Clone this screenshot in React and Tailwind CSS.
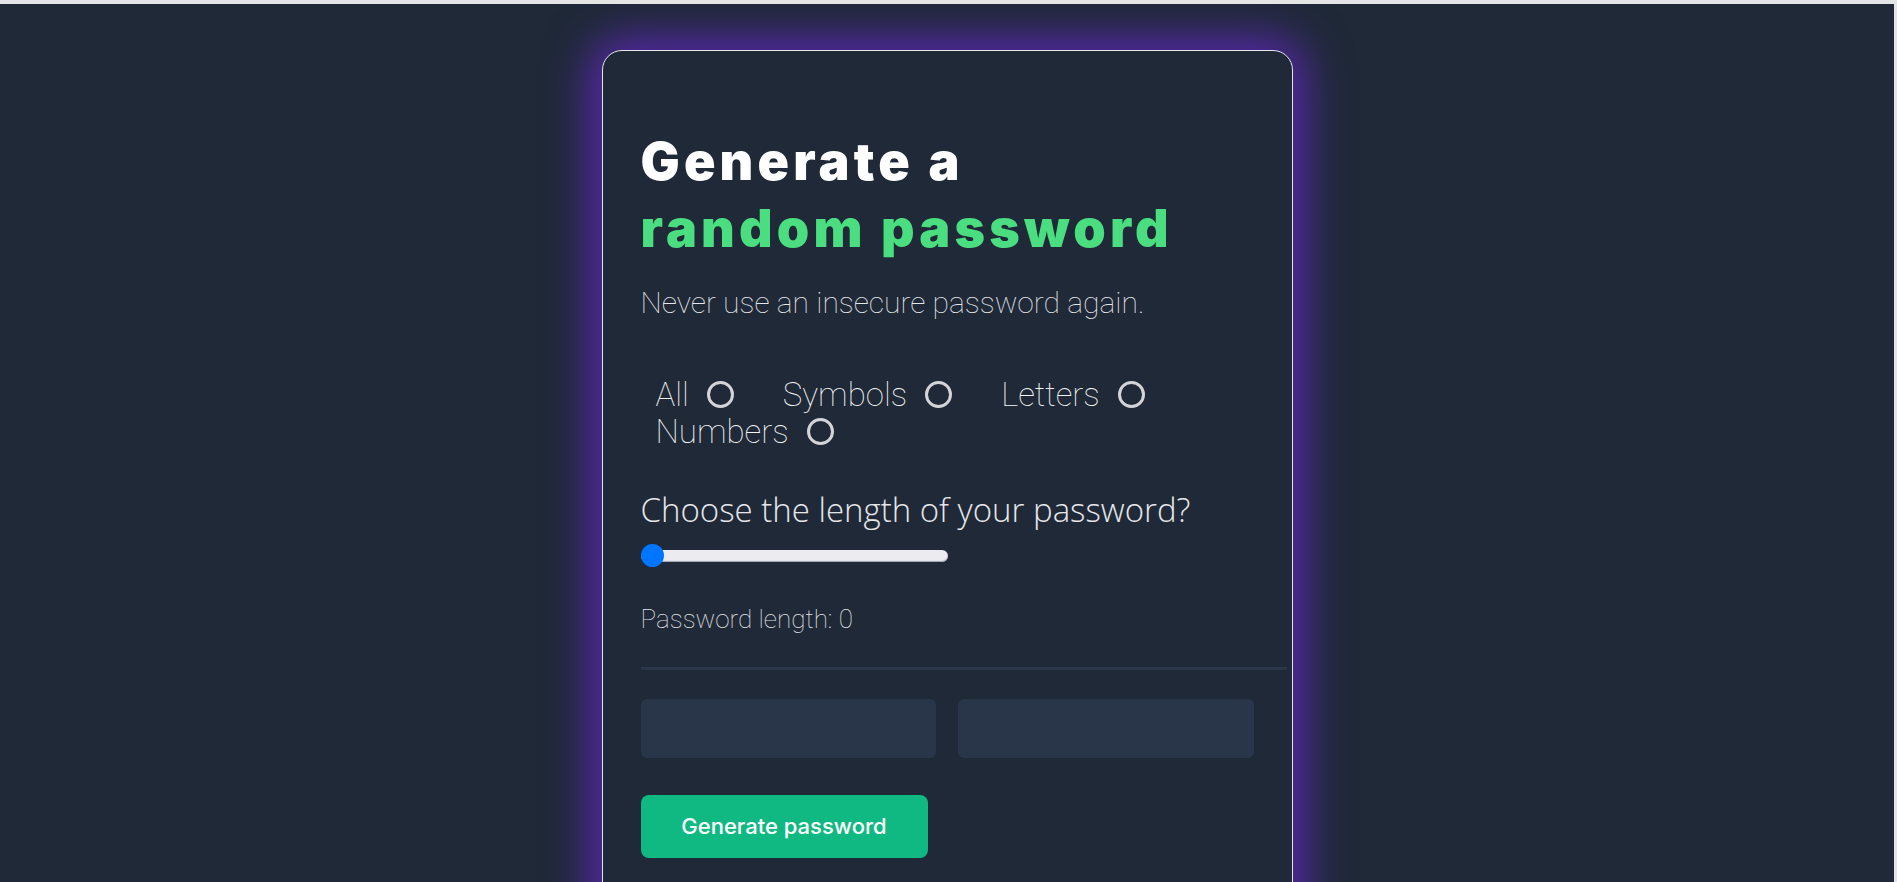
import { useState } from "react";

// 비밀번호 생성 카드 (목업 화면)
const options = ["All", "Symbols", "Letters", "Numbers"];

export default function App() {
  const [length, setLength] = useState(0);

  return (
    <div className="h-screen flex flex-col overflow-hidden">
      {/* 브라우저 상단 여백 */}
      <div className="h-[4px] bg-[#e5e5e5] shrink-0" />

      <div className="flex-1 flex min-h-0">
        <main className="flex-1 bg-[#1f2937] pt-[46px] overflow-hidden">
          <div className="mx-auto w-[691px] rounded-[20px] border border-[#e5e7eb] bg-[#1f2937] pl-[38px] pr-[38px] pt-[77px] pb-[80px] shadow-[0_0_45px_12px_rgba(109,40,217,0.72)]">
            {/* 제목 */}
            <h1 className="font-['Inter',sans-serif] font-black text-[52px] leading-[67px] tracking-[0.08em] text-white">
              Generate a
              <br />
              <span className="text-[#4ade80]">random password</span>
            </h1>

            <p className="mt-[23px] font-['Roboto',sans-serif] font-thin text-[30px] leading-[36px] text-[#e5e7eb]">
              Never use an insecure password again.
            </p>

            {/* 옵션 체크박스 */}
            <div className="mt-[55px] pl-[15px] flex flex-wrap">
              {options.map((opt) => (
                <label
                  key={opt}
                  className="flex items-center gap-[18px] mr-[49px] h-[37px] font-['Roboto',sans-serif] font-thin text-[33px] leading-[37px] text-[#f3f4f6]"
                >
                  {opt}
                  <input
                    type="checkbox"
                    className="appearance-none w-[27px] h-[27px] rounded-full border-[3px] border-[#d4d4d8] bg-transparent"
                  />
                </label>
              ))}
            </div>

            <p className="mt-[40px] font-['Open_Sans',sans-serif] font-extralight text-[33px] leading-[40px] text-[#e5e7eb]">
              Choose the length of your password?
            </p>

            {/* 길이 슬라이더 */}
            <div className="mt-[14px] h-[23px] flex items-center">
              <input
                type="range"
                min="0"
                max="20"
                value={length}
                onChange={(e) => setLength(Number(e.target.value))}
                className="appearance-none w-[307px] h-[12px] rounded-full bg-[#ececf0] shadow-[inset_0_-1px_1px_#9ca3af] [&::-webkit-slider-thumb]:appearance-none [&::-webkit-slider-thumb]:w-[23px] [&::-webkit-slider-thumb]:h-[23px] [&::-webkit-slider-thumb]:rounded-full [&::-webkit-slider-thumb]:bg-[#0075ff]"
              />
            </div>

            <p className="mt-[36px] font-['Roboto',sans-serif] font-thin text-[26px] leading-[32px] text-[#e5e7eb]">
              Password length: {length}
            </p>

            <div className="mt-[32px] -mr-[33px] h-[3px] bg-[#2b3748]" />

            {/* 결과 출력 칸 */}
            <div className="mt-[29px] grid grid-cols-2 gap-[22px]">
              <div className="h-[59px] rounded-md bg-[#293649]" />
              <div className="h-[59px] rounded-md bg-[#293649]" />
            </div>

            <button className="mt-[37px] w-[287px] h-[63px] rounded-lg bg-[#10b981] text-white font-['Inter',sans-serif] font-medium text-[22px]">
              Generate password
            </button>
          </div>
        </main>
        <div className="w-[3px] bg-[#e5e5e5] shrink-0" />
      </div>
    </div>
  );
}
